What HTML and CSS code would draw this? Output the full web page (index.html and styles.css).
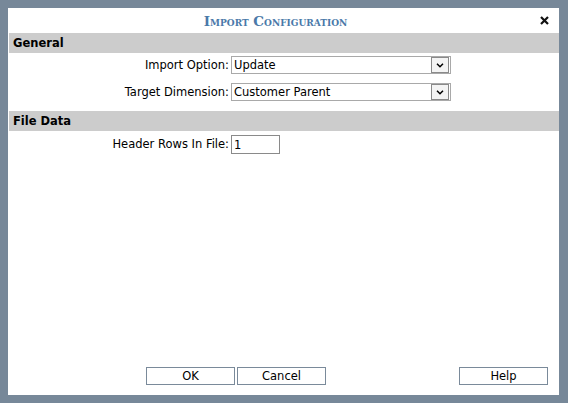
FILE: index.html
```html
<!DOCTYPE html>
<html lang="en">

<head>
    <meta charset="UTF-8">
    <title>Import Configuration</title>
    <link rel="stylesheet" href="styles.css">
</head>

<body>
    <div class="dialog">
        <div class="dialog-title">
            <span>Import Configuration</span>
            <button class="close-btn" title="Close">
                <svg width="9" height="9" viewBox="0 0 9 9"><path d="M1 1 L8 8 M8 1 L1 8" stroke="#111" stroke-width="2.2"/></svg>
            </button>
        </div>

        <div class="section-header">General</div>
        <div class="form-grid">
            <label for="import-option">Import Option:</label>
            <div class="select-box" id="import-option">
                <span>Update</span>
                <span class="select-arrow">
                    <svg width="8" height="5" viewBox="0 0 8 5"><path d="M1 0.8 L4 3.8 L7 0.8" fill="none" stroke="#000" stroke-width="1.5"/></svg>
                </span>
            </div>

            <label for="target-dimension">Target Dimension:</label>
            <div class="select-box" id="target-dimension">
                <span>Customer Parent</span>
                <span class="select-arrow">
                    <svg width="8" height="5" viewBox="0 0 8 5"><path d="M1 0.8 L4 3.8 L7 0.8" fill="none" stroke="#000" stroke-width="1.5"/></svg>
                </span>
            </div>
        </div>

        <div class="section-header">File Data</div>
        <div class="form-grid">
            <label for="header-rows">Header Rows In File:</label>
            <input type="text" class="text-input" id="header-rows" value="1">
        </div>

        <div class="dialog-footer">
            <button class="btn">OK</button>
            <button class="btn">Cancel</button>
            <button class="btn btn-help">Help</button>
        </div>
    </div>
</body>

</html>
```

FILE: styles.css
```css
* {
    margin: 0;
    padding: 0;
    box-sizing: border-box;
}

body {
    background-color: #778899;
    font-family: "DejaVu Sans", Verdana, sans-serif;
    font-size: 11.5px;
    color: #000;
}

.dialog {
    margin: 8px;
    width: 551px;
    height: 387px;
    background-color: #fff;
    display: flex;
    flex-direction: column;
}

.dialog-title {
    height: 25px;
    display: flex;
    align-items: center;
    justify-content: center;
    position: relative;
}

.dialog-title span {
    font-family: "DejaVu Serif", Georgia, serif;
    font-variant: small-caps;
    font-weight: bold;
    font-size: 13.5px;
    color: #4a79a9;
    margin-right: 16px;
}

.close-btn {
    position: absolute;
    right: 10px;
    top: 8px;
    background: none;
    border: none;
    cursor: pointer;
    display: flex;
}

.section-header {
    background-color: #cccccc;
    height: 20px;
    line-height: 20px;
    padding-left: 4px;
    margin-left: 1px;
    font-weight: bold;
    font-size: 11.5px;
}

.form-grid {
    display: grid;
    grid-template-columns: 221px auto;
    column-gap: 2px;
    row-gap: 9px;
    align-items: center;
    padding: 3px 0 10px;
}

.form-grid label {
    text-align: right;
}

.select-box {
    width: 220px;
    height: 18px;
    border: 1px solid #a9a9a9;
    display: flex;
    align-items: center;
    justify-content: space-between;
    padding-left: 2px;
}

.select-arrow {
    width: 18px;
    height: 16px;
    margin-right: 1px;
    border: 1px solid #8a8a8a;
    background-color: #f4f4f4;
    display: flex;
    align-items: center;
    justify-content: center;
}

.text-input {
    width: 49px;
    height: 19px;
    margin-top: 1px;
    border: 1px solid #8a8a8a;
    padding-left: 2px;
    font-family: inherit;
    font-size: 11.5px;
}

.dialog-footer {
    margin-top: auto;
    padding: 0 11px 10px 138px;
    display: flex;
    gap: 2px;
}

.btn {
    width: 89px;
    height: 18px;
    background-color: #fff;
    border: 1px solid #7a8a9a;
    font-family: inherit;
    font-size: 11.5px;
    cursor: pointer;
}

.btn-help {
    margin-left: auto;
}
```
